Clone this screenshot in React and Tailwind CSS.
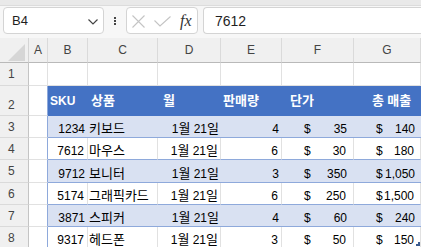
import { useMemo } from "react";

// 한글만 조금 크게 — 숫자/라틴 글자는 Liberation Sans 12px
const HANGUL = /([\uAC00-\uD7A3\u3131-\u318E]+)/;
function T({ s }) {
  return (
    <span className="whitespace-pre">
      {s.split(HANGUL).map((p, i) =>
        HANGUL.test(p) ? (
          <span key={i} className="text-[13px]">
            {p}
          </span>
        ) : (
          p
        )
      )}
    </span>
  );
}

const rows = [
  ["1234", "키보드", "1월 21일", "4", "35", "140"],
  ["7612", "마우스", "1월 21일", "6", "30", "180"],
  ["9712", "보니터", "1월 21일", "3", "350", "1,050"],
  ["5174", "그래픽카드", "1월 21일", "6", "250", "1,500"],
  ["3871", "스피커", "1월 21일", "4", "60", "240"],
  ["9317", "헤드폰", "1월 21일", "3", "50", "150"],
];

function FormulaBar() {
  return (
    <div className="flex h-[32px] items-start bg-[#f7f7f7] pt-[1px]">
      {/* Name box */}
      <div className="ml-[3px] flex h-[27px] w-[101px] items-center justify-between rounded-[4px] border border-[#d4d4d4] bg-white pl-[8px] pr-[5px]">
        <span className="text-[13px] text-[#1f1f1f]">B4</span>
        <svg width="10" height="6" viewBox="0 0 10 6" className="mt-[2px]">
          <polyline points="0.5,0.5 5,5 9.5,0.5" fill="none" stroke="#444" strokeWidth="1.2" />
        </svg>
      </div>
      <div className="flex h-[27px] w-[22px] flex-col items-center justify-center gap-[1px]">
        <span className="h-[2px] w-[2px] bg-[#444]" />
        <span className="h-[2px] w-[2px] bg-[#444]" />
        <span className="h-[2px] w-[2px] bg-[#444]" />
      </div>
      {/* cancel / enter / fx */}
      <div className="flex h-[27px] w-[72px] items-center rounded-[4px] border border-[#d4d4d4] bg-white pl-[5px]">
        <svg width="13" height="13" viewBox="0 0 13 13" className="mt-[2px]">
          <path d="M0.5 0.5 L12.5 12.5 M12.5 0.5 L0.5 12.5" stroke="#c4c4c4" strokeWidth="1.1" />
        </svg>
        <svg width="17" height="11" viewBox="0 0 17 11" className="ml-[9px] mt-[2px]">
          <polyline points="0.5,4.5 6,10 16.5,0.5" fill="none" stroke="#c4c4c4" strokeWidth="1.1" />
        </svg>
        <span className="ml-[9px] font-['Liberation_Serif',serif] text-[16px] italic text-[#333]">fx</span>
      </div>
      {/* formula input */}
      <div className="ml-[5px] flex h-[27px] flex-1 items-center rounded-l-[4px] border border-r-0 border-[#d4d4d4] bg-white pl-[11px]">
        <span className="text-[14px] text-[#1f1f1f]">7612</span>
      </div>
    </div>
  );
}

export default function App() {
  const cols = useMemo(() => ["A", "B", "C", "D", "E", "F", "G"], []);

  return (
    <div className="relative h-[247px] w-[421px] overflow-hidden bg-white font-['Liberation_Sans','Noto_Sans_CJK_KR',sans-serif] text-[12px] leading-[16px] text-black">
      <div className="h-[6px] border-b border-[#dcdcdc] bg-[#e9e9e9]" />
      <FormulaBar />

      <div className="grid grid-cols-[29px_19px_40px_70px_63px_61px_72px_67px] grid-rows-[25px_23px_30px_22px_22px_23px_22px_22px_22px]">
        {/* column headers */}
        <div className="flex items-end justify-end border-b border-r border-b-[#b9b9b9] border-r-[#d4d4d4] bg-[#f0f0f0] pb-[1px] pr-[3px]">
          <svg width="17" height="17" viewBox="0 0 17 17">
            <polygon points="17,0 17,17 0,17" fill="#d6d6d6" />
          </svg>
        </div>
        {cols.map((c) => (
          <div
            key={c}
            className="flex items-center justify-center border-b border-r border-b-[#b9b9b9] border-r-[#dadada] bg-[#f0f0f0] text-[#444]"
          >
            {c}
          </div>
        ))}

        {/* row 1 */}
        <div className="flex items-center border-b border-r border-b-[#dadada] border-r-[#c4c4c4] bg-[#f0f0f0] pl-[8px] text-[#444]">
          1
        </div>
        {cols.map((c) => (
          <div key={`r1-${c}`} className="border-b border-r border-[#e1e1e1] bg-white" />
        ))}

        {/* row 2 — table header */}
        <div className="flex items-end border-b border-r border-b-[#dadada] border-r-[#c4c4c4] bg-[#f0f0f0] pb-[2px] pl-[8px] text-[#444]">
          2
        </div>
        <div className="border-b border-r border-b-[#e1e1e1] border-r-[#8ea9db] bg-white" />
        <div className="flex items-center bg-[#4472c4] pl-[2px] font-bold text-white">SKU</div>
        <div className="flex items-center bg-[#4472c4] pl-[3px] font-bold text-white">
          <T s="상품" />
        </div>
        <div className="flex items-center bg-[#4472c4] pl-[5px] font-bold text-white">
          <T s="월" />
        </div>
        <div className="flex items-center bg-[#4472c4] pl-[2px] font-bold text-white">
          <T s="판매량" />
        </div>
        <div className="flex items-center bg-[#4472c4] pl-[8px] font-bold text-white">
          <T s="단가" />
        </div>
        <div className="flex items-center bg-[#4472c4] pl-[18px] font-bold text-white">
          <T s="총 매출" />
        </div>

        {/* data rows */}
        {rows.map((r, i) => {
          const band = i % 2 === 0;
          const cell = band
            ? "flex items-end border-b border-b-[#8ea9db] bg-[#d9e1f2]"
            : "flex items-end border-b border-r border-b-[#8ea9db] border-r-[#e1e1e1] bg-white";
          return [
            <div
              key={`h${i}`}
              className="flex items-center border-b border-r border-b-[#dadada] border-r-[#c4c4c4] bg-[#f0f0f0] pl-[8px] text-[#444]"
            >
              {i + 3}
            </div>,
            <div key={`a${i}`} className="border-b border-r border-b-[#e1e1e1] border-r-[#8ea9db] bg-white" />,
            <div key={`b${i}`} className={`${cell} justify-end pr-[3px]`}>
              {r[0]}
            </div>,
            <div key={`c${i}`} className={`${cell} pl-[1px]`}>
              <T s={r[1]} />
            </div>,
            <div key={`d${i}`} className={`${cell} justify-end pr-[2px]`}>
              <T s={r[2]} />
            </div>,
            <div key={`e${i}`} className={`${cell} justify-end pr-[3px]`}>
              {r[3]}
            </div>,
            <div key={`f${i}`} className={`${cell} justify-between pl-[22px] pr-[7px]`}>
              <span>$</span>
              <span>{r[4]}</span>
            </div>,
            <div key={`g${i}`} className={`${cell} justify-between pl-[22px] pr-[6px]`}>
              <span>$</span>
              <span>{r[5]}</span>
            </div>,
          ];
        })}
      </div>

      {/* table resize handle */}
      <span className="absolute left-[416px] top-[242px] h-[4px] w-[4px] border-b-2 border-r-2 border-[#3b5b8f]" />
    </div>
  );
}
